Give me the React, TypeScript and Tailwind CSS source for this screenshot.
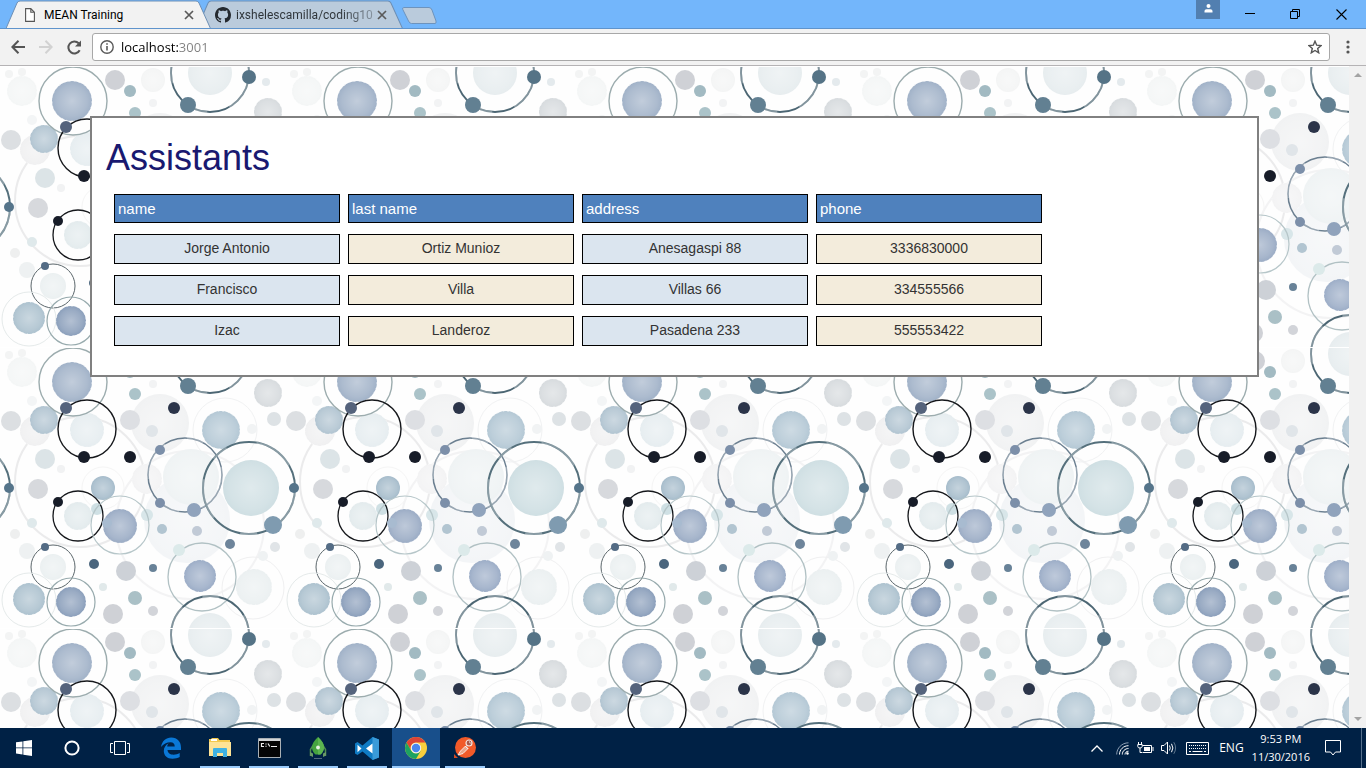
import React from "react";

const TILE_W = 285;
const TILE_H = 281;

type Circle = [x: number, y: number, r: number, color: string, width?: number];

const circles: Circle[] = [
  [190, 178, 74, "#f3f3f4", 2],
  [80, 135, 65, "#ebebec", 2],
  [187, 173, 43, "#f3f5f7"],
  [160, 76, 29, "#f1f2f3"],
  [147, 132, 15, "#f3f3f4"],
  [35, 84, 15, "#f0f0f1"],
  [22, 25, 15, "#f4f6f6"],
  [22, 287, 4, "#f3f4f4"],
  [153, 14, 12, "#f4f5f5"],
  [153, 37, 4, "#f2f3f4"],
  [9, 8, 4, "#f3f4f4"],
  [32, 54, 5, "#f3f5f6"],
  [225, 83, 32, "#f1f2f3", 1],
  [252, 82, 5, "#f1f3f4"],
  [191, 130, 28, "#eff3f4"],
  [87, 83, 17, "#e6edf0"],
  [78, 169, 14, "#e3ebed"],
  [53, 220, 13, "#ebf0f1"],
  [210, 7, 22, "#e7edef"],
  [254, 240, 18, "#ebf0f1"],
  [253, 241, 31, "#f0f0f1", 1],
  [263, 209, 5, "#eff2f3"],
  [27, 204, 8, "#eef1f2"],
  [15, 187, 5, "#eeefef"],
  [32, 176, 5, "#dfe9eb"],
  [61, 122, 4, "#f1f2f3"],
  [103, 141, 21, "#f5f5f5", 1],
  [11, 74, 10, "#dcdfe2"],
  [130, 73, 10, "#dddfe3"],
  [152, 84, 6, "#e0e5e9"],
  [135, 47, 6, "#abc3c9"],
  [130, 25, 6, "#a2bac2"],
  [115, 14, 10, "#cfd1d6"],
  [113, 267, 10, "#cfd1d6"],
  [126, 224, 10, "#cdd1d7"],
  [153, 264, 5, "#d2d4d9"],
  [135, 251, 7, "#aac0c6"],
  [103, 240, 4, "#e1e9ea"],
  [268, 46, 14, "#d7dbde"],
  [274, 72, 7, "#dde2e5"],
  [266, 16, 4, "#e4eaed"],
  [275, 200, 5, "#e0e4e7"],
  [45, 112, 10, "#dce4e7"],
  [38, 142, 10, "#d7d9dd"],
  [44, 73, 14, "#b1c4d1"],
  [72, 35, 20, "#a1b2c8"],
  [73, 35, 34, "#9cacae", 1.4],
  [87, 82, 29, "#15171b", 1.4],
  [66, 61, 6, "#55637c"],
  [84, 110, 6, "#171c28"],
  [130, 110, 6, "#171c28"],
  [174, 61, 6, "#2b3449"],
  [221, 83, 19, "#b4c8d5"],
  [185, 128, 37, "#6b7f90", 1.5],
  [160, 103, 5, "#7c8fa9"],
  [160, 156, 5, "#7c8fa9"],
  [194, 163, 7, "#90a3bc"],
  [251, 141, 28, "#cfdfe3"],
  [249, 141, 46, "#55707c", 2],
  [273, 178, 9, "#7f9bb0"],
  [294, 141, 5, "#55748a"],
  [103, 141, 12, "#a6bccb"],
  [97, 162, 6, "#cfe0e4"],
  [147, 168, 6, "#d8e6e9"],
  [78, 169, 25, "#15171b", 1.3],
  [58, 155, 5, "#171c28"],
  [120, 179, 17, "#9bacc5"],
  [120, 178, 29, "#b6c6c9", 1.2],
  [107, 176, 5, "#a8bbd0"],
  [162, 182, 5, "#b2c5d1"],
  [197, 184, 5, "#c1cad6"],
  [230, 197, 5, "#6e859b"],
  [53, 220, 22, "#5b666b", 1],
  [45, 200, 4, "#546c85"],
  [94, 217, 5, "#4a657d"],
  [153, 221, 4, "#688298"],
  [29, 252, 16, "#adc2cf"],
  [29, 253, 27, "#e5eaea", 1],
  [71, 255, 15, "#8b9fbb"],
  [71, 255, 24, "#97aaad", 1.2],
  [200, 229, 16, "#9cadc7"],
  [202, 230, 34, "#b1c1c4", 1.3],
  [179, 203, 6, "#dceaea"],
  [210, 7, 39, "#4c6673", 1.9],
  [188, 39, 8, "#628092"],
  [249, 11, 7, "#557386"],
];

const shifts = [-1, 0, 1].flatMap((i) => [-1, 0, 1].map((j) => [i * TILE_W, j * TILE_H]));

function Bubbles() {
  return (
    <svg className="absolute inset-0 h-full w-full" aria-hidden="true">
      <defs>
        <radialGradient id="sheen">
          <stop offset="0" stopColor="#fff" stopOpacity="0.35" />
          <stop offset="0.75" stopColor="#fff" stopOpacity="0.12" />
          <stop offset="1" stopColor="#fff" stopOpacity="0" />
        </radialGradient>
        <pattern id="bubbles" width={TILE_W} height={TILE_H} patternUnits="userSpaceOnUse">
          <rect width={TILE_W} height={TILE_H} fill="#fefefe" />
          {circles.flatMap(([x, y, r, color, width], n) =>
            shifts
              .filter(([dx, dy]) => x + dx + r > -2 && x + dx - r < TILE_W + 2 && y + dy + r > -2 && y + dy - r < TILE_H + 2)
              .map(([dx, dy]) =>
                width ? (
                  <g key={`${n}:${dx}:${dy}`} fill="none">
                    <circle cx={x + dx} cy={y + dy} r={r} stroke={color} strokeWidth={width} />
                    {width > 1.4 && r < 60 && (
                      <circle cx={x + dx} cy={y + dy} r={r} stroke="#fff" strokeOpacity="0.3" strokeWidth={width} strokeDasharray="41 23 17 31" />
                    )}
                  </g>
                ) : (
                  <g key={`${n}:${dx}:${dy}`}>
                    <circle cx={x + dx} cy={y + dy} r={r} fill={color} />
                    {r > 11 && <circle cx={x + dx} cy={y + dy} r={r} fill="url(#sheen)" />}
                    {r > 13 && r < 22 && (
                      <circle cx={x + dx} cy={y + dy} r={r} fill="none" stroke="#fff" strokeOpacity="0.6" strokeDasharray="2 4 1 3" />
                    )}
                  </g>
                )
              )
          )}
          <rect width={TILE_W} height="1" fill="#fff" />
        </pattern>
      </defs>
      <rect width="100%" height="100%" fill="url(#bubbles)" />
    </svg>
  );
}

function CloseX() {
  return (
    <svg width="10" height="10" viewBox="0 0 10 10" stroke="#5a5a5a" strokeWidth="1.7">
      <path d="M1 1l8 8M9 1l-8 8" />
    </svg>
  );
}

function TabShape({ fill }: { fill: string }) {
  return (
    <svg className="absolute inset-0 h-full w-full" viewBox="0 0 205 28" preserveAspectRatio="none" aria-hidden="true">
      <path d="M0 28.5L11 3Q12 1 14 1H190Q192 1 193 3L204.500 28.500" fill={fill} stroke="#6d8fb5" strokeWidth="1" />
    </svg>
  );
}

function TabStrip() {
  return (
    <header className="flex h-7 shrink-0 bg-[#73b6fb] font-['Roboto','Liberation_Sans',sans-serif] text-xs">
      <div className="relative z-10 ml-1.5 flex w-[205px] items-center pt-0.5 pr-[17px] pl-[19px]">
        <TabShape fill="#f2f2f2" />
        <svg className="relative shrink-0" width="10" height="14" viewBox="0 0 10 14" fill="#fff" stroke="#555" strokeWidth="1.1">
          <path d="M.6.6h5.200L9.400 4.300V13.400H.6zM5.800.6v3.700h3.600" />
        </svg>
        <button className="relative ml-[9px] flex-1 text-left text-black">MEAN Training</button>
        <button className="relative" aria-label="Close MEAN Training"><CloseX /></button>
      </div>
      <div className="relative -ml-3.5 flex w-[206px] items-center pt-0.5 pr-4 pl-[18px]">
        <TabShape fill="#bacbdc" />
        <svg className="relative shrink-0" width="16" height="16" viewBox="0 0 16 16" fill="#24292f" aria-hidden="true">
          <path d="M8 0C3.580 0 0 3.580 0 8c0 3.540 2.290 6.530 5.470 7.590.4.070.55-.17.55-.38 0-.19-.01-.82-.01-1.490-2.010.37-2.530-.49-2.690-.94-.09-.23-.48-.94-.82-1.130-.28-.15-.68-.52-.01-.53.63-.01 1.080.58 1.230.82.72 1.210 1.870.87 2.330.66.07-.52.28-.87.51-1.070-1.780-.2-3.640-.89-3.640-3.950 0-.87.31-1.590.82-2.150-.08-.2-.36-1.020.08-2.120 0 0 .67-.21 2.200.82.64-.18 1.320-.27 2-.27s1.360.09 2 .27c1.530-1.040 2.200-.82 2.200-.82.44 1.100.16 1.920.08 2.120.51.56.82 1.270.82 2.150 0 3.070-1.870 3.750-3.650 3.950.29.25.54.73.54 1.480 0 1.070-.01 1.930-.01 2.200 0 .21.15.46.55.38A8.010 8.010 0 0 0 16 8c0-4.420-3.580-8-8-8z" />
        </svg>
        <button className="relative ml-[5px] flex-1 bg-linear-to-r from-[#2d3338] from-75% to-[#2d333850] bg-clip-text text-left whitespace-nowrap text-transparent">
          ixshelescamilla/coding10
        </button>
        <button className="relative ml-0.5" aria-label="Close ixshelescamilla/coding10"><CloseX /></button>
      </div>
      <button className="-ml-px flex pt-[7px]" aria-label="New tab">
        <svg width="36" height="18" viewBox="0 0 36 18" aria-hidden="true">
          <path d="M1.500.5H27Q29 .5 30 3L34 14Q34.500 16.500 33 16.500H9.500Q7.500 16.500 6.500 14L.8 2.500Q.3.5 1.500.5z" fill="#bacbdc" stroke="#6d93bd" />
        </svg>
      </button>
      <div className="ml-auto flex">
        <button className="flex h-[19px] w-6 justify-center bg-[#527fb0] pt-1" aria-label="Profile">
          <svg width="9" height="9" viewBox="0 0 9 9" fill="#fff"><circle cx="4.500" cy="2" r="2" /><path d="M.5 8.500V7Q.5 5.200 2.500 5.200h4Q8.500 5.200 8.500 7v1.500z" /></svg>
        </button>
        <button className="ml-[7px] flex w-[46px] items-center justify-center" aria-label="Minimize">
          <svg width="10" height="10" viewBox="0 0 10 10" stroke="#000"><path d="M0 4.500h10" /></svg>
        </button>
        <button className="flex w-[45px] items-center justify-center" aria-label="Restore">
          <svg width="11" height="11" viewBox="0 0 11 11" fill="none" stroke="#000"><path d="M.5 2.500h7v7h-7zM2.500 2.500v-2h7v7h-2" /></svg>
        </button>
        <button className="mr-0.5 flex w-[46px] items-center justify-center" aria-label="Close">
          <svg width="11" height="11" viewBox="0 0 11 11" stroke="#000" strokeWidth="1.100"><path d="M.5.5l10 10M10.500.5l-10 10" /></svg>
        </button>
      </div>
    </header>
  );
}

function Toolbar() {
  return (
    <nav className="flex h-[38px] shrink-0 items-center border-t border-b border-t-[#5f94cc] border-b-[#b5b3b5] bg-[#f2f2f2]">
      <button className="ml-[11px]" aria-label="Back">
        <svg width="14" height="14" viewBox="0 0 14 14" fill="none" stroke="#555" strokeWidth="2"><path d="M14 7H1.500M7.500.8L1.400 7l6.100 6.200" /></svg>
      </button>
      <button className="ml-3.5" aria-label="Forward" disabled>
        <svg width="14" height="14" viewBox="0 0 14 14" fill="none" stroke="#d2d2d2" strokeWidth="2"><path d="M0 7h12.500M6.500.8L12.600 7l-6.100 6.200" /></svg>
      </button>
      <button className="ml-3.5" aria-label="Reload">
        <svg width="15" height="15" viewBox="0 0 15 15"><path d="M12.700 10.200A6 6 0 1 1 11.700 3.200" fill="none" stroke="#555" strokeWidth="2" /><path d="M14 .5V6.600H8z" fill="#555" /></svg>
      </button>
      <div className="mr-4 ml-2.5 flex h-7 flex-1 items-center rounded-[3px] border border-[#a8a8a8] bg-white pr-[7px] pl-[7px]">
        <svg className="shrink-0" width="14" height="14" viewBox="0 0 14 14" aria-hidden="true">
          <circle cx="7" cy="7" r="6.200" fill="none" stroke="#5a5a5a" strokeWidth="1.400" />
          <path d="M6.200 3.200h1.600v1.600H6.200zM6.200 6h1.600v4.600H6.200z" fill="#5a5a5a" />
        </svg>
        <input
          aria-label="Address"
          defaultValue="localhost:3001"
          className="ml-[7px] min-w-0 flex-1 bg-linear-to-r from-black from-[57px] to-[#808080] to-[57px] bg-clip-text font-['Open_Sans','Noto_Sans',sans-serif] text-[13px] leading-5 text-transparent outline-none"
        />
        <button aria-label="Bookmark this page">
          <svg width="14" height="14" viewBox="0 0 14 14" fill="none" stroke="#555" strokeWidth="1.400"><path d="M7 1.200l1.700 4 4.300.4-3.300 2.900 1 4.300L7 10.500l-3.700 2.300 1-4.300L1 5.600l4.300-.4z" /></svg>
        </button>
      </div>
      <button className="mr-4 flex" aria-label="Menu">
        <svg width="4" height="14" viewBox="0 0 4 14" fill="#555"><circle cx="2" cy="2" r="1.600" /><circle cx="2" cy="7" r="1.600" /><circle cx="2" cy="12" r="1.600" /></svg>
      </button>
    </nav>
  );
}

const assistants = [
  ["Jorge Antonio", "Ortiz Munioz", "Anesagaspi 88", "3336830000"],
  ["Francisco", "Villa", "Villas 66", "334555566"],
  ["Izac", "Landeroz", "Pasadena 233", "555553422"],
];

function Assistants() {
  return (
    <section className="relative mx-auto mt-[50px] max-w-[1169px] border-2 border-[#808080] bg-white px-3.5 pt-5 pb-[18px]">
      <h1 className="mb-[5px] text-4xl leading-10 text-[#191970]">Assistants</h1>
      <table className="border-separate border-spacing-x-2 border-spacing-y-[11px]">
        <thead>
          <tr>
            {["name", "last name", "address", "phone"].map((label) => (
              <th key={label} scope="col" className="h-[29px] w-[226px] border border-black bg-[#4f81bd] px-[3px] py-0 text-left text-[15px] leading-5 font-normal text-white">
                {label}
              </th>
            ))}
          </tr>
        </thead>
        <tbody>
          {assistants.map((row) => (
            <tr key={row[0]}>
              {row.map((value) => (
                <td key={value} className="border border-black pt-[3px] pb-[5px] text-center text-sm leading-5 text-[#333] odd:bg-[#dbe5ef] even:bg-[#f3ecdc]">
                  {value}
                </td>
              ))}
            </tr>
          ))}
        </tbody>
      </table>
    </section>
  );
}

function Scrollbar() {
  return (
    <div className="flex w-[17px] shrink-0 flex-col items-center justify-between bg-[#f1f1f1] py-[7px]" aria-hidden="true">
      <svg width="8" height="4" viewBox="0 0 8 4" fill="#a3a3a3"><path d="M0 4l4-4 4 4z" /></svg>
      <svg width="8" height="4" viewBox="0 0 8 4" fill="#a3a3a3"><path d="M0 0l4 4 4-4z" /></svg>
    </div>
  );
}

const apps = [
  {
    name: "Microsoft Edge",
    open: false,
    icon: (
      <svg width="22" height="22" viewBox="0 0 22 22" fill="#0a78d7">
        <path d="M1 10C2 4 6 .5 11.200.5 17.500.5 21 5 21 10.500V13H7.500c.2 3 2.700 4.700 6 4.700 2.300 0 4.300-.6 6.200-1.700V20c-2 1.200-4.500 1.700-7.200 1.700C7 21.700 3.800 18.500 3.800 14c0-3.400 1.800-6.200 5-7.700C7.700 7.300 7.300 8.500 7.200 9.500h7.500c.1-2.700-1.300-4.300-4.200-4.300C6.700 5.200 3.500 7 1 10z" />
      </svg>
    ),
  },
  {
    name: "File Explorer",
    open: true,
    icon: (
      <svg width="22" height="20" viewBox="0 0 22 20">
        <path d="M0 1h2l1-1h6l1.500 2H21v16H0z" fill="#f2c94f" />
        <path d="M2 1h6v2H2z" fill="#fff" />
        <path d="M0 4h22v14H0z" fill="#fde396" />
        <path d="M4 19v-8q0-1 1-1h12q1 0 1 1v8h-4v-4H8v4z" fill="#3fb2e4" />
      </svg>
    ),
  },
  {
    name: "Command Prompt",
    open: true,
    icon: (
      <svg width="23" height="20" viewBox="0 0 23 20">
        <path d="M.5.5h22v19H.5z" fill="#050505" stroke="#aab0b5" />
        <path d="M1 1h21v2H1z" fill="#d3d6d8" />
        <path d="M6 5.500H3.500v3H6M8 5.500v1M8 7.800v1M10 5.500l1.800 3M13 8.500h6" fill="none" stroke="#eee" strokeWidth="1.200" />
      </svg>
    ),
  },
  {
    name: "Robomongo",
    open: true,
    icon: (
      <svg width="20" height="24" viewBox="0 0 20 24">
        <path d="M5 9.500L2.500 13.500V20M15 9.500l2.500 4V20" fill="none" stroke="#4f8d4e" strokeWidth="1.500" />
        <path d="M2 16l3 1.500v3.500L2 19.500zM18 16l-3 1.500v3.500l3-1.500z" fill="#6a9a67" />
        <path d="M10 1c4 3.800 6 6.800 6 10.500 0 3-1.700 5.500-3.500 7h-5C5.700 17 4 14.500 4 11.500 4 7.800 6 4.800 10 1z" fill="#45a33f" />
        <path d="M10 1c4 3.800 6 6.800 6 10.500 0 3-1.700 5.500-3.500 7H10z" fill="#5cb550" />
        <circle cx="10" cy="11.500" r="1.900" fill="#e6f2e3" />
        <path d="M6 22.500h8" stroke="#53677e" />
      </svg>
    ),
  },
  {
    name: "Visual Studio Code",
    open: true,
    icon: (
      <svg width="24" height="23" viewBox="0 0 24 23">
        <path d="M17.500 0L24 2.500v18L17.500 23 7.500 14.500 2.500 18 0 16.500V6.500L2.500 5l5 3.500z" fill="#0f7bc4" />
        <path d="M17.500 0L24 2.500v18L17.500 23z" fill="#3a9bd9" />
        <path d="M2.500 7.800v7.400l4-3.700zM17.500 6.500v10l-6.500-5z" fill="#fff" />
      </svg>
    ),
  },
  {
    name: "Google Chrome",
    open: true,
    active: true,
    icon: (
      <svg width="22" height="22" viewBox="0 0 22 22">
        <circle cx="11" cy="11" r="11" fill="#f9cf3d" />
        <path d="M1.500 5.500A11 11 0 0 1 20.500 5.500H11A5.500 5.500 0 0 0 6.200 13.700z" fill="#dc4437" />
        <path d="M1.500 5.500L6.200 13.700A5.500 5.500 0 0 0 15.800 13.700L11 22A11 11 0 0 1 1.500 5.500z" fill="#1da261" />
        <circle cx="11" cy="11" r="5.200" fill="#f4f4f4" />
        <circle cx="11" cy="11" r="4.200" fill="#4a86ee" />
      </svg>
    ),
  },
  {
    name: "Postman",
    open: true,
    icon: (
      <svg width="22" height="22" viewBox="0 0 22 22">
        <circle cx="11.500" cy="10.500" r="10.500" fill="#f15a29" />
        <path d="M0 17l4 4H0z" fill="#d44b22" />
        <path d="M4 18L6.500 14l5-5 2.500 2.500-5 5z" fill="#e9a48a" stroke="#fff" strokeWidth=".8" />
        <circle cx="15" cy="6" r="3" fill="#a8584a" stroke="#f4e4de" strokeWidth="1.200" />
        <path d="M11 9l3 3M15.500 4.500l.8 2" stroke="#eee" />
      </svg>
    ),
  },
];

function Taskbar() {
  return (
    <footer className="flex h-10 shrink-0 bg-[#002145] font-['Open_Sans','Noto_Sans',sans-serif] text-[11px] text-white">
      <button className="flex w-12 items-center justify-center" aria-label="Start">
        <svg width="16" height="16" viewBox="0 0 16 16" fill="#fff"><path d="M0 2.300l6.500-.9v6.100H0zM7.300 1.300L16 0v7.500H7.300zM0 8.300h6.500v6.200L0 13.600zM7.300 8.300H16V16l-8.700-1.300z" /></svg>
      </button>
      <button className="flex w-12 items-center justify-center" aria-label="Cortana">
        <svg width="16" height="16" viewBox="0 0 16 16" fill="none" stroke="#fff" strokeWidth="2"><circle cx="8" cy="8" r="6.600" /></svg>
      </button>
      <button className="flex w-12 items-center justify-center" aria-label="Task view">
        <svg width="20" height="14" viewBox="0 0 20 14" fill="none" stroke="#fff"><path d="M4.500.5h11v13h-11zM3 2.500H.5v9H3M17 2.500h2.500v9H17" /></svg>
      </button>
      <div className="ml-[3px] flex gap-px">
        {apps.map((app) => (
          <button key={app.name} aria-label={app.name} className={app.active ? "flex w-12 flex-col bg-[#184f8b]" : "flex w-12 flex-col items-center"}>
            <span className="flex w-full flex-1 items-center justify-center pt-0.5">{app.icon}</span>
            <span className={!app.open ? "h-0.5" : app.active ? "h-0.5 w-full bg-[#9acbfb]" : "h-0.5 w-10 bg-[#9acbfb]"} />
          </button>
        ))}
      </div>
      <div className="ml-auto flex items-center">
        <button aria-label="Show hidden icons">
          <svg width="12" height="7" viewBox="0 0 12 7" fill="none" stroke="#fff" strokeWidth="1.300"><path d="M.5 6.500L6 1l5.500 5.500" /></svg>
        </button>
        <button className="ml-[13px]" aria-label="Wi-Fi">
          <svg width="13" height="13" viewBox="0 0 13 13" fill="none" stroke="#fff">
            <path d="M.7 12.500C.7 6 6 .8 12.500.8" stroke="#8b9db2" /><path d="M3.500 12.500C3.500 7.500 7.500 3.700 12.500 3.700M6.300 12.500c0-3.400 2.800-6 6.200-6M9 12.500c0-1.800 1.500-3.300 3.500-3.300" /><circle cx="11.500" cy="11.500" r="1.200" fill="#fff" stroke="none" />
          </svg>
        </button>
        <button className="ml-2" aria-label="Battery">
          <svg width="17" height="12" viewBox="0 0 17 12" fill="none" stroke="#fff">
            <path d="M5.500 3.500h9v7h-9M16 5v4M1.500 0v2M4.500 0v2M.8 2.500h4.400v2Q5 6 3 6 .8 6 .8 4.500zM3 6v4.500h2" /><path d="M7 5h6v4H7z" fill="#fff" stroke="none" />
          </svg>
        </button>
        <button className="ml-[7px]" aria-label="Volume">
          <svg width="16" height="14" viewBox="0 0 16 14" fill="none" stroke="#fff">
            <path d="M.5 4.500H3l3.500-3.500v12L3 9.500H.5zM8.500 4.500q1.500 2.500 0 5M10.500 2.800q2.800 4.200 0 8.400" /><path d="M12.800 1.200q3.600 5.800 0 11.600" stroke="#60788f" />
          </svg>
        </button>
        <button className="ml-[9px]" aria-label="Touch keyboard">
          <svg width="23" height="13" viewBox="0 0 23 13" fill="none" stroke="#fff"><path d="M.5.5h22v12H.5z" /><path d="M3 3.500h17M3 6.500h17" strokeDasharray="1 1" /><path d="M3 9.500h2M6.500 9.500h10M18 9.500h2" /></svg>
        </button>
        <button className="ml-2.5 text-xs">ENG</button>
        <time className="ml-2 text-center leading-[18px]" dateTime="2016-11-30T21:53">9:53 PM<br />11/30/2016</time>
        <button className="ml-[15px]" aria-label="Notifications">
          <svg width="16" height="16" viewBox="0 0 16 16" fill="none" stroke="#fff"><path d="M.5.5h15v11.500H10.500L8 15l-2.500-3H.5z" /></svg>
        </button>
        <div className="mr-1 ml-5 h-10 w-px bg-[#56708c]" />
      </div>
    </footer>
  );
}

export default function App() {
  return (
    <div className="flex h-screen flex-col overflow-hidden bg-white font-['Liberation_Sans',Arial,sans-serif]">
      <TabStrip />
      <Toolbar />
      <div className="flex min-h-0 flex-1">
        <main className="relative flex-1 overflow-hidden">
          <Bubbles />
          <Assistants />
        </main>
        <Scrollbar />
      </div>
      <Taskbar />
    </div>
  );
}
